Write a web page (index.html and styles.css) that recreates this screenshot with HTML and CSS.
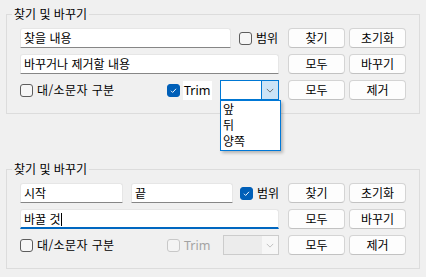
FILE: index.html
```html
<!DOCTYPE html>
<html lang="ko">
<head>
    <meta charset="UTF-8">
    <title>찾기 및 바꾸기</title>
    <link rel="stylesheet" href="styles.css">
</head>
<body>

<fieldset class="group">
    <legend>찾기 및 바꾸기</legend>

    <div class="row">
        <div class="fields">
            <div class="text w-find">찾을 내용</div>
            <span class="check range"><span class="box"></span>범위</span>
        </div>
        <div class="btns">
            <button class="btn">찾기</button>
            <button class="btn">초기화</button>
        </div>
    </div>

    <div class="row">
        <div class="fields">
            <div class="text w-full">바꾸거나 제거할 내용</div>
        </div>
        <div class="btns">
            <button class="btn">모두</button>
            <button class="btn">바꾸기</button>
        </div>
    </div>

    <div class="row">
        <div class="fields">
            <span class="check case"><span class="box"></span>대/소문자 구분</span>
            <span class="check trim">
                <span class="box on"><svg viewBox="0 0 13 13"><path d="M3.5 6.8l2 2 4-4.3" /></svg></span>
                <span class="trim-label">Trim</span>
            </span>
            <div class="combo open">
                <span class="combo-val"></span>
                <span class="combo-arrow"><svg viewBox="0 0 10 6"><path d="M1 1l4 4 4-4" /></svg></span>
                <ul class="combo-list">
                    <li>앞</li>
                    <li>뒤</li>
                    <li>양쪽</li>
                </ul>
            </div>
        </div>
        <div class="btns">
            <button class="btn">모두</button>
            <button class="btn">제거</button>
        </div>
    </div>
</fieldset>

<fieldset class="group second">
    <legend>찾기 및 바꾸기</legend>

    <div class="row">
        <div class="fields">
            <div class="text w-start">시작</div>
            <div class="text w-end">끝</div>
            <span class="check range2">
                <span class="box on"><svg viewBox="0 0 13 13"><path d="M3.5 6.8l2 2 4-4.3" /></svg></span>범위
            </span>
        </div>
        <div class="btns">
            <button class="btn">찾기</button>
            <button class="btn">초기화</button>
        </div>
    </div>

    <div class="row">
        <div class="fields">
            <div class="text w-full focus">바꿀 것<span class="caret"></span></div>
        </div>
        <div class="btns">
            <button class="btn">모두</button>
            <button class="btn">바꾸기</button>
        </div>
    </div>

    <div class="row">
        <div class="fields">
            <span class="check case"><span class="box"></span>대/소문자 구분</span>
            <span class="check trim off">
                <span class="box"></span>
                <span class="trim-label">Trim</span>
            </span>
            <div class="combo disabled">
                <span class="combo-val"></span>
                <span class="combo-arrow"><svg viewBox="0 0 10 6"><path d="M1 1l4 4 4-4" /></svg></span>
            </div>
        </div>
        <div class="btns">
            <button class="btn">모두</button>
            <button class="btn">제거</button>
        </div>
    </div>
</fieldset>

</body>
</html>
```

FILE: styles.css
```css
html, body {
    margin: 0;
    width: 100%;
    height: 100%;
    background-color: #f0f0f0;
    font: 12px "Noto Sans CJK KR", "Noto Sans", sans-serif;
    color: #000;
}

.group {
    box-sizing: border-box;
    width: 414px;
    margin: 6px 0 0 6px;
    padding: 6px 12px 13px 13px;
    border: 1px solid #dcdcdc;
}

.group.second {
    margin-top: 47px;
}

.group legend {
    padding: 0 2px;
    margin-left: -8px;
    line-height: 16px;
    color: #000;
}

.row {
    display: flex;
    align-items: center;
    height: 20px;
    margin-bottom: 6px;
}

.row:last-child {
    margin-bottom: 0;
}

.fields {
    display: flex;
    align-items: center;
    width: 260px;
    height: 20px;
}

.btns {
    display: flex;
    gap: 4px;
    margin-left: 8px;
}

.btn {
    box-sizing: border-box;
    width: 57px;
    height: 20px;
    padding: 0;
    background: #fdfdfd;
    border: 1px solid #d4d4d4;
    border-bottom-color: #c2c2c2;
    border-radius: 4px;
    font: 12px "Noto Sans CJK KR", sans-serif;
    line-height: 16px;
    color: #000;
}

/* text boxes */
.text {
    box-sizing: border-box;
    height: 20px;
    padding: 0 3px;
    background: #fff;
    border: 1px solid #e6e6e6;
    border-bottom-color: #868686;
    border-radius: 3px 3px 0 0;
    line-height: 18px;
    white-space: nowrap;
}

.w-find { width: 211px; }
.w-full { width: 259px; }
.w-start { width: 103px; }
.w-end { width: 102px; margin-left: 8px; }

.text.focus {
    border-bottom: 2px solid #0067c0;
    line-height: 17px;
}

.caret {
    display: inline-block;
    width: 1px;
    height: 13px;
    margin-left: 1px;
    background: #000;
    vertical-align: -2px;
}

/* checkboxes */
.check {
    display: flex;
    align-items: center;
    white-space: nowrap;
    line-height: 16px;
}

.check .box {
    box-sizing: border-box;
    width: 13px;
    height: 13px;
    margin-right: 4px;
    border: 1px solid #5d5d5d;
    border-radius: 3px;
    background: #f6f6f6;
}

.check .box.on {
    background: #005fb8;
    border-color: #005fb8;
}

.check .box svg {
    display: block;
    width: 11px;
    height: 11px;
    fill: none;
    stroke: #fff;
    stroke-width: 1.1;
}

.range {
    margin-left: 8px;
}

.range2 {
    margin-left: 7px;
}

.check.case {
    width: 147px;
    letter-spacing: 0.4px;
}

.check.trim .box {
    margin-right: 3px;
}

.trim-label {
    box-sizing: border-box;
    width: 29px;
    height: 19px;
    padding: 0 0 0 1px;
    background: #fff;
    font-family: "Noto Sans", sans-serif;
    font-size: 12.5px;
    line-height: 19px;
}

.check.off .box {
    border-color: #c8c8c8;
    background: #f4f4f4;
}

.check.off .trim-label {
    background: transparent;
    color: #a3a3a3;
}

/* dropdown */
.combo {
    position: relative;
    box-sizing: border-box;
    display: flex;
    width: 59px;
    height: 20px;
    margin-left: 8px;
    background: #fff;
    border: 1px solid #0078d4;
}

.combo-val {
    flex: 1;
}

.combo-arrow {
    display: flex;
    align-items: center;
    justify-content: center;
    width: 16px;
    background: #cce4f7;
    border-left: 1px solid #0078d4;
}

.combo-arrow svg {
    width: 8px;
    height: 5px;
    fill: none;
    stroke: #555;
    stroke-width: 1;
}

.combo.disabled {
    margin-left: 11px;
    width: 56px;
    border-color: #cccccc;
    background: #ececec;
}

.combo.disabled .combo-arrow {
    background: #f7f7f7;
    border-left: none;
}

.combo.disabled .combo-arrow svg {
    stroke: #b5b5b5;
}

.combo-list {
    position: absolute;
    left: -1px;
    top: 19px;
    z-index: 2;
    box-sizing: border-box;
    width: 61px;
    margin: 0;
    padding: 0 0 1px;
    list-style: none;
    background: #fff;
    border: 1px solid #0078d7;
    box-shadow: 2px 2px 3px rgba(0, 0, 0, 0.25);
}

.combo-list li {
    height: 16px;
    padding-left: 2px;
    line-height: 16px;
}
```
